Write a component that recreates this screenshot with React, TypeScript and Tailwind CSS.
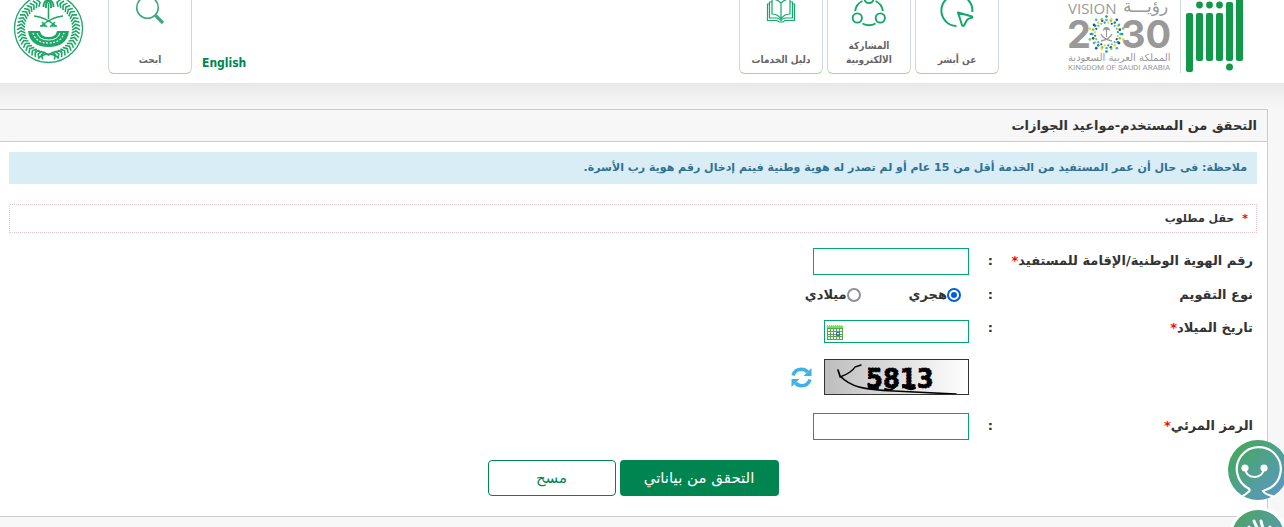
import type { PropsWithChildren, ReactNode } from "react";

const leafAngles = Array.from({ length: 22 }, (_, i) => 18 + i * 7);
const ringAngles = Array.from({ length: 20 }, (_, i) => i * 18);
const ringColors = ["#0f9aa0", "#f2d230", "#1d4fa3", "#35b6e6", "#8cc63f"];

function polar(cx: number, cy: number, r: number, deg: number) {
	const rad = (deg * Math.PI) / 180;
	return { x: cx + r * Math.sin(rad), y: cy - r * Math.cos(rad) };
}

function AbsherLogo() {
	return (
		<svg width="58" height="83" viewBox="0 0 58 83" fill="#119849" role="img" aria-label="أبشر">
			<rect x="0" y="13" width="7" height="59" rx="2" />
			<rect x="10" y="13" width="7" height="48" rx="2" />
			<rect x="20" y="13" width="7" height="48" rx="2" />
			<rect x="30" y="13" width="7" height="48" rx="2" />
			<rect x="40" y="2" width="7" height="59" rx="2" />
			<rect x="50" y="-6" width="7" height="67" rx="2" />
			<circle cx="13.5" cy="5" r="3.4" />
			<circle cx="23.5" cy="5" r="3.4" />
			<circle cx="33.5" cy="5" r="3.4" />
			<circle cx="43.5" cy="67" r="3.5" />
		</svg>
	);
}

function VisionLogo() {
	return (
		<svg width="105" height="83" viewBox="0 0 105 83" fill="#999999" direction="ltr" className="overflow-visible">
			<text x="0" y="14" className="font-['Open_Sans'] text-[15px]">
				VISION
			</text>
			<text x="55" y="12" className="font-['DejaVu_Sans'] text-[17px]">
				رؤيـــة
			</text>
			<text x="-1" y="48" className="font-['Inter'] text-[38px] font-bold">
				2
			</text>
			<text x="53" y="48" className="font-['Inter'] text-[38px] font-bold">
				30
			</text>
			{ringAngles.map((a, i) => {
				const inner = polar(38.5, 34, 11.5, a + 9);
				const mid = polar(38.5, 34, 14, a);
				const outer = polar(38.5, 34, i % 2 ? 15.5 : 17.5, a);
				return (
					<g key={a}>
						<circle cx={inner.x} cy={inner.y} r="1.1" fill={ringColors[(i + 1) % 5]} />
						<circle cx={mid.x} cy={mid.y} r="1.3" fill={ringColors[(i + 3) % 5]} />
						<circle cx={outer.x} cy={outer.y} r="1.3" fill={ringColors[i % 5]} />
					</g>
				);
			})}
			<path d="M38 30h1v7h-1zM35 31q0-4 3.500-4t3.500 4l-2-1.500-1.500 1.500-1.500-1.500z" />
			<path d="M33 34q2 5 11 7M44 34q-2 5-11 7" fill="none" stroke="#999999" strokeWidth="1.300" />
			<text x="0" y="61" className="font-['DejaVu_Sans'] text-[10px]">
				المملكة العربية السعودية
			</text>
			<text x="0" y="70" className="font-['Roboto'] text-[8px]">
				KINGDOM OF SAUDI ARABIA
			</text>
		</svg>
	);
}

function Emblem() {
	return (
		<svg width="71" height="83" viewBox="0 0 71 83" fill="none" stroke="#1fa768" role="img" aria-label="وزارة الداخلية">
			<circle cx="35.500" cy="28.500" r="34" strokeWidth="1.300" />
			{leafAngles.map((a) => {
				const left = polar(35.5, 28.5, 27.5, -a);
				const right = polar(35.5, 28.5, 27.5, a);
				return (
					<g key={a} strokeWidth="1.600">
						<path d="M-4-2.500L0 0l4-2.500" transform={`translate(${right.x} ${right.y}) rotate(${a + 90})`} />
						<path d="M-4-2.500L0 0l4-2.500" transform={`translate(${left.x} ${left.y}) rotate(${-90 - a})`} />
					</g>
				);
			})}
			<path d="M35.500 3v16" strokeWidth="1.600" />
			<path d="M35.500 1q-5-1-5 6M35.500 1q5-1 5 6M35.500 1q-3 1-2.500 7M35.500 1q3 1 2.500 7M29-1q6 0 6.500 2 .500-2 6.500-2" strokeWidth="1.900" />
			<path d="M21 16q11 1 22 10M50 16q-11 1-22 10M29 22l5 5M42 22l-5 5M27 26h5M44 26h-5" strokeWidth="1.500" />
			<path d="M15 31h12q1 6 8.500 6t8.500-6h12q-2 16-20.500 16T15 31z" fill="#1fa768" stroke="none" />
			<path d="M20 33q3 10 15.500 10T51 33" stroke="#ffffff" strokeWidth="1.200" strokeDasharray="2 1.500" />
			<path d="M24 33q2 7 11.500 7T47 33" stroke="#ffffff" strokeWidth="1" />
			<path d="M22 51q8 0 13.500 4 5.500-4 13.500-4M25 58q6-4 10.500-4t10.500 4" strokeWidth="1.700" />
		</svg>
	);
}

function AboutIcon() {
	return (
		<svg width="36" height="36" viewBox="0 0 36 36" fill="none" stroke="#12a86b" strokeWidth="2">
			<path d="M33.300 21A15.500 15.500 0 1 0 17.500 35" />
			<path d="M19 21.500l14 4q1 1-1 1.500-3 .500-4 2l-3 5.500q-1.500 1-2-.500z" strokeLinejoin="round" />
		</svg>
	);
}

function ParticipationIcon() {
	return (
		<svg width="36" height="36" viewBox="0 0 36 36" fill="none" stroke="#12a86b" strokeWidth="1.900">
			<circle cx="18" cy="7.500" r="4.600" />
			<circle cx="6.300" cy="27" r="4.600" />
			<circle cx="29.300" cy="27" r="4.600" />
			<path d="M11.500 10Q5 13 4.200 20M24.500 10Q31 13 31.800 20M11.500 32.500q6.500 3.500 13 0" />
		</svg>
	);
}

function GuideIcon() {
	return (
		<svg width="36" height="36" viewBox="0 0 36 36" fill="none" stroke="#12a86b" strokeWidth="1.200">
			<path d="M18 12v16M18 12q-4-4-9-4v15q6 0 9 5 3-5 9-5V8q-5 0-9 4" />
			<path d="M9 11H6.500v16H14q2.500.500 4 2.500 1.500-2 4-2.500h7.500V11H27" />
			<path d="M6.500 13h-2v16.500H14l2 1.500h4l2-1.500h9.500V13h-2" />
		</svg>
	);
}

function SearchIcon() {
	return (
		<svg width="36" height="36" viewBox="0 0 36 36" fill="none" stroke="#3fa97c" strokeWidth="1.600">
			<circle cx="15.500" cy="16.500" r="10.800" />
			<path d="M23.500 24.500l7.500 7.500" strokeWidth="3.200" />
		</svg>
	);
}

interface TileProps {
	text: string;
	icon: ReactNode;
}
function Tile({ text, icon }: TileProps) {
	return (
		<button
			type="button"
			className="flex h-25 w-21 shrink-0 flex-col items-center justify-between rounded-md border border-gray-300 border-b-[#8ee87a] bg-white px-1 pt-4 pb-1.5 text-[10px] leading-[14px] font-bold text-[#666]"
		>
			{icon}
			<span>{text}</span>
		</button>
	);
}

interface RowProps {
	className: string;
	label?: string;
	htmlFor?: string;
	required?: boolean;
}
function Row({ className, label, htmlFor, required, children }: PropsWithChildren<RowProps>) {
	return (
		<div className={`${className} flex text-[13px] leading-4 font-bold text-[#333]`}>
			<div className="w-65 shrink-0">
				{label && (
					<label htmlFor={htmlFor}>
						{label}
						{required && <span className="text-[#f00]">*</span>}
					</label>
				)}
			</div>
			<span className="w-6 shrink-0">{label && ":"}</span>
			{children}
		</div>
	);
}

interface CalendarRadioProps {
	text: string;
	value: string;
	checked?: boolean;
}
function CalendarRadio({ text, value, checked }: CalendarRadioProps) {
	return (
		<label className="flex items-center">
			<input
				type="radio"
				name="calendar"
				value={value}
				defaultChecked={checked}
				className="size-3.5 appearance-none rounded-full border-2 border-[#8f8f9d] bg-white bg-clip-content p-0.5 checked:border-[#0060df] checked:bg-[#0060df]"
			/>
			{text}
		</label>
	);
}

function CalendarIcon() {
	return (
		<svg width="16" height="16" viewBox="0 0 16 16">
			<path d="M0 1h16v15H0z" fill="#55a94c" />
			<path d="M0 1h16v3H0z" fill="#6ae35d" />
			<path d="M1 1.500h15" stroke="#fff" strokeDasharray="1 1" />
			<path
				d="M1 5h2v2H1zM4 5h2v2H4zM7 5h2v2H7zM10 5h2v2h-2zM13 5h2v2h-2zM1 8h2v2H1zM4 8h2v2H4zM7 8h2v2H7zM10 8h2v2h-2zM13 8h2v2h-2zM1 11h2v1H1zM4 11h2v1H4zM7 11h2v1H7zM10 11h2v1h-2zM13 11h2v1h-2zM1 13h2v2H1zM4 13h2v2H4zM7 13h2v2H7zM10 13h2v2h-2zM13 13h2v2h-2z"
				fill="#fff"
			/>
			<path d="M9.500 8.500h3v3h-3z" fill="none" stroke="#3b6fe0" />
		</svg>
	);
}

function Captcha() {
	return (
		<svg width="145" height="36" viewBox="0 0 143 34" direction="ltr" className="border border-[#333]">
			<defs>
				<linearGradient id="captcha">
					<stop offset="0" stopColor="#bdbdbd" />
					<stop offset="1" stopColor="#ffffff" />
				</linearGradient>
			</defs>
			<rect width="143" height="34" fill="url(#captcha)" />
			<text
				x="41"
				y="28"
				stroke="#000"
				strokeWidth="1"
				strokeDasharray="2 1"
				className="font-['DejaVu_Sans_Condensed'] text-[27px] font-bold"
			>
				5813
			</text>
			<g fill="none" stroke="#000" strokeLinecap="round">
				<path d="M13 10l2 6q8 8 19 11t35 4l62 3" strokeWidth="1.700" />
				<path d="M15 17q6-2 10-5t5-5l6-2" strokeWidth="1.400" />
				<path d="M44 28q5 2 9 0M60 29q5 2 9-1M78 26q6 5 12 2" strokeWidth="2" />
			</g>
		</svg>
	);
}

function RefreshIcon() {
	return (
		<svg width="21" height="21" viewBox="0 0 21 21" fill="none" stroke="#3cb4e7" strokeWidth="3.600">
			<path d="M2 8.500Q4 2.300 10.500 2.300q3.500 0 6 2.700M19 12.500Q17 18.700 10.500 18.700q-3.500 0-6-2.700" />
			<path d="M20.500 1v8h-8zM.5 20v-8h8z" fill="#3cb4e7" stroke="none" />
		</svg>
	);
}

function AssistantIcon() {
	return (
		<svg width="60" height="60" viewBox="0 0 60 60" fill="none" stroke="#fff" strokeWidth="2.200">
			<path d="M13 57q4-2 8-5.500 1.500-1.500-.500-3A22 22 0 1 1 42 48l-7 3q1 3 12 6" />
			<circle cx="17" cy="28" r="2.500" fill="#fff" />
			<circle cx="36" cy="28" r="2.500" fill="#fff" />
			<path d="M17 28q1 9 9.500 9t9.500-9" />
		</svg>
	);
}

function HandIcon() {
	return (
		<svg width="52" height="52" viewBox="0 0 52 52" fill="none" stroke="#fff" strokeWidth="3" strokeLinecap="round">
			<path d="M17 17l8 12M22 11l7 16M29 11l4 16M38 17l-1 14M22 29q8 12 16 1" />
		</svg>
	);
}

export default function App() {
	return (
		<div
			dir="rtl"
			className="relative min-h-screen overflow-hidden bg-[#f7f7f7] font-['DejaVu_Sans',sans-serif]"
		>
			<header className="flex h-[83px] items-end overflow-hidden bg-white pr-10 pl-[13px] font-['DejaVu_Sans_Condensed','DejaVu_Sans',sans-serif]">
				<AbsherLogo />
				<div className="mr-[5px] h-[73px] self-start border-r border-gray-300" />
				<div className="mr-[7px] ml-[69px]">
					<VisionLogo />
				</div>
				<nav className="mb-[9px] flex gap-1">
					<Tile text="عن أبشر" icon={<AboutIcon />} />
					<Tile text="المشاركة الالكترونية" icon={<ParticipationIcon />} />
					<Tile text="دليل الخدمات" icon={<GuideIcon />} />
				</nav>
				<div className="mr-auto mb-[9px] flex items-end gap-2.5">
					<a href="#english" className="pb-[3px] text-[12px] leading-4 font-bold text-[#008550]">
						English
					</a>
					<Tile text="ابحث" icon={<SearchIcon />} />
				</div>
				<div className="mr-6">
					<Emblem />
				</div>
			</header>
			<div className="h-[26px] bg-linear-to-b from-[#e9e9e9] to-[#f7f7f7]" />
			<main className="mr-4 border-y border-r border-[#ccc] bg-white">
				<h1 className="border-b border-[#ccc] bg-[#f7f7f7] px-2.5 text-[13px] leading-[31px] font-bold text-[#333]">
					التحقق من المستخدم-مواعيد الجوازات
				</h1>
				<form className="pt-2.5 pr-2.5 pb-5 pl-[9px]" onSubmit={(e) => e.preventDefault()}>
					<p className="bg-[#d9edf7] px-2.5 text-[11px] leading-8 font-bold text-[#31708f]">
						ملاحظة: فى حال أن عمر المستفيد من الخدمة أقل من 15 عام أو لم تصدر له هوية وطنية فيتم إدخال رقم هوية رب الأسرة.
					</p>
					<p className="mt-5 border border-dotted border-[#e5c5cb] px-2 text-[11px] leading-[27px] font-bold text-[#333]">
						<span className="ml-2 text-[#f00]">*</span>
						حقل مطلوب
					</p>
					<div className="mt-[11px] px-1">
						<Row className="h-[34px] items-center" label="رقم الهوية الوطنية/الإقامة للمستفيد" htmlFor="identity" required>
							<input id="identity" type="text" className="h-[27px] w-39 border border-[#00a86b] px-1" />
						</Row>
						<Row className="h-[34px] items-center" label="نوع التقويم">
							<div role="radiogroup" aria-label="نوع التقويم" className="flex gap-12 px-2">
								<CalendarRadio text="هجري" value="hijri" checked />
								<CalendarRadio text="ميلادي" value="gregorian" />
							</div>
						</Row>
						<Row className="h-10 items-start pt-2" label="تاريخ الميلاد" htmlFor="birth" required>
							<div className="flex h-[23px] w-[145px] items-center border border-[#00a86b] pl-0.5">
								<input id="birth" type="text" className="min-w-0 flex-1 px-1 outline-none" />
								<button type="button" aria-label="التقويم">
									<CalendarIcon />
								</button>
							</div>
						</Row>
						<Row className="h-[50px] items-center">
							<Captcha />
							<button type="button" aria-label="تحديث" className="mr-3">
								<RefreshIcon />
							</button>
						</Row>
						<Row className="h-12 items-center" label="الرمز المرئي" htmlFor="code" required>
							<input id="code" type="text" className="h-[27px] w-39 border border-[#00a86b] px-1" />
						</Row>
					</div>
					<div className="mt-2.5 flex justify-center gap-1 text-[15px]">
						<button type="submit" className="h-9 w-[159px] rounded-sm bg-[#008550] text-white">
							التحقق من بياناتي
						</button>
						<button type="reset" className="h-9 w-32 rounded-sm border border-[#008550] bg-white text-[#008550]">
							مسح
						</button>
					</div>
				</form>
			</main>
			<div className="absolute top-[440px] -right-1 flex flex-col items-center gap-[7px]">
				<button type="button" aria-label="المساعد" className="size-15 rounded-full bg-linear-135 from-[#45a846] to-[#5f93cc]">
					<AssistantIcon />
				</button>
				<button
					type="button"
					aria-label="لغة الإشارة"
					className="rounded-full border-3 border-white bg-linear-135 from-[#4ba556] to-[#5f93cc]"
				>
					<HandIcon />
				</button>
			</div>
		</div>
	);
}
